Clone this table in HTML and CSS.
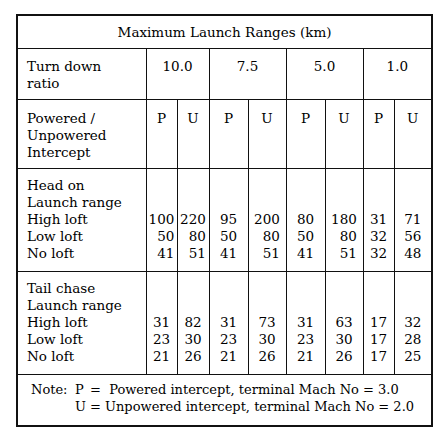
FILE: index.html
```html
<!DOCTYPE html>
<html lang="en">
<head>
    <meta charset="UTF-8">
    <title>Maximum Launch Ranges</title>
    <link rel="stylesheet" href="styles.css">
</head>
<body>
    <table class="ranges">
        <colgroup>
            <col class="c-label">
            <col class="c-a"><col class="c-b">
            <col class="c-c"><col class="c-d">
            <col class="c-c"><col class="c-d">
            <col class="c-a"><col class="c-e">
        </colgroup>
        <tr class="r-title">
            <th colspan="9">Maximum Launch Ranges (km)</th>
        </tr>
        <tr class="r-ratio">
            <td class="label">Turn down<br>ratio</td>
            <td colspan="2" class="mid">10.0</td>
            <td colspan="2" class="mid">7.5</td>
            <td colspan="2" class="mid">5.0</td>
            <td colspan="2" class="mid">1.0</td>
        </tr>
        <tr class="r-mode">
            <td class="label">Powered /<br>Unpowered<br>Intercept</td>
            <td class="mid">P</td><td class="mid">U</td>
            <td class="mid">P</td><td class="mid">U</td>
            <td class="mid">P</td><td class="mid">U</td>
            <td class="mid">P</td><td class="mid">U</td>
        </tr>
        <tr class="r-data">
            <td class="label">Head on<br>Launch range<br>High loft<br>Low loft<br>No loft</td>
            <td class="num"><div>100<br>50<br>41</div></td>
            <td class="num"><div>220<br>80<br>51</div></td>
            <td class="num"><div>95<br>50<br>41</div></td>
            <td class="num"><div>200<br>80<br>51</div></td>
            <td class="num"><div>80<br>50<br>41</div></td>
            <td class="num"><div>180<br>80<br>51</div></td>
            <td class="num"><div>31<br>32<br>32</div></td>
            <td class="num"><div>71<br>56<br>48</div></td>
        </tr>
        <tr class="r-data">
            <td class="label">Tail chase<br>Launch range<br>High loft<br>Low loft<br>No loft</td>
            <td class="num"><div>31<br>23<br>21</div></td>
            <td class="num"><div>82<br>30<br>26</div></td>
            <td class="num"><div>31<br>23<br>21</div></td>
            <td class="num"><div>73<br>30<br>26</div></td>
            <td class="num"><div>31<br>23<br>21</div></td>
            <td class="num"><div>63<br>30<br>26</div></td>
            <td class="num"><div>17<br>17<br>17</div></td>
            <td class="num"><div>32<br>28<br>25</div></td>
        </tr>
        <tr class="r-note">
            <td colspan="9">
                <div class="note">
                    <span>Note:</span>
                    <span class="key">P</span>
                    <span class="def">=  Powered intercept, terminal Mach No = 3.0</span>
                    <span></span>
                    <span class="key">U</span>
                    <span class="def">= Unpowered intercept, terminal Mach No = 2.0</span>
                </div>
            </td>
        </tr>
    </table>
</body>
</html>
```

FILE: styles.css
```css
body {
    margin: 0;
    background: #fff;
    font-family: "DejaVu Serif", "Liberation Serif", serif;
    font-size: 13.5px;
    line-height: 17px;
    color: #000;
}
.ranges {
    margin: 14px 0 0 16px;
    width: 416px;
    table-layout: fixed;
    border-collapse: collapse;
    border: 2px solid #111;
}
.c-label { width: 129px; }
.c-a { width: 31px; }
.c-b { width: 32px; }
.c-c { width: 39px; }
.c-d { width: 38px; }
.c-e { width: 38px; }
th, td {
    border: 1px solid #111;
    padding: 0;
}
th {
    font-weight: normal;
    text-align: center;
    height: 32px;
}
.label {
    padding-left: 9px;
}
.r-ratio td {
    height: 41px;
    vertical-align: top;
    padding-top: 9px;
}
.r-mode td {
    height: 58px;
    vertical-align: top;
    padding-top: 10px;
}
.mid {
    text-align: center;
}
.r-data td {
    height: 93px;
    vertical-align: bottom;
    padding-bottom: 9px;
}
.num {
    text-align: center;
}
.num div {
    display: inline-block;
    text-align: right;
}
.r-note td {
    height: 44px;
    vertical-align: top;
    padding: 6px 0 0 13px;
}
.note {
    display: grid;
    grid-template-columns: 44px 15px auto;
    font-size: 13px;
}
.def {
    white-space: pre;
}
```
